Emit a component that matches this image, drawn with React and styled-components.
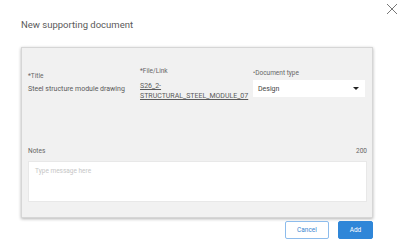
import React from "react";
import styled, { createGlobalStyle } from "styled-components";

const Global = createGlobalStyle`
  html, body {
    margin: 0;
    background: #ffffff;
    font-family: Roboto, "Liberation Sans", sans-serif;
  }
`;

const Page = styled.div`
  position: relative;
  width: 400px;
  height: 243px;
  box-sizing: border-box;
  padding: 19px 27px 0 21px;
`;

const Close = styled.button`
  position: absolute;
  top: 3px;
  right: 2px;
  width: 12px;
  height: 12px;
  padding: 0;
  border: none;
  background: none;
  cursor: pointer;
`;

const Heading = styled.h1`
  margin: 0;
  font-size: 9.5px;
  font-weight: 400;
  color: #5a5a5a;
  line-height: 12px;
`;

const Panel = styled.div`
  margin-top: 16px;
  height: 171px;
  box-sizing: border-box;
  background: #f1f1f1;
  border: 1px solid #d6d6d6;
  box-shadow: 0 1px 3px rgba(0, 0, 0, 0.3);
  padding: 16px 5px 15px 6px;
  display: flex;
  flex-direction: column;
`;

const Fields = styled.div`
  display: grid;
  grid-template-columns: 112px 113px 112px;
  align-items: start;
`;

const Field = styled.div`
  display: flex;
  flex-direction: column;
  padding-top: ${(p) => p.$offset || 0}px;
`;

const Label = styled.div`
  font-size: 6.5px;
  color: #666;
  line-height: 8px;
  margin-bottom: ${(p) => p.$gap || 5}px;
`;

const Value = styled.div`
  font-size: 7px;
  color: #5a5a5a;
  line-height: 9px;
`;

const FileLink = styled.a`
  font-size: 7px;
  color: #5a5a5a;
  line-height: 10px;
  text-decoration: underline;
`;

const Select = styled.div`
  height: 17px;
  background: #fff;
  display: flex;
  align-items: center;
  justify-content: space-between;
  padding: 0 5px;
  font-size: 7px;
  color: #444;
`;

const Caret = styled.span`
  width: 0;
  height: 0;
  border-left: 3px solid transparent;
  border-right: 3px solid transparent;
  border-top: 3px solid #222;
  margin-right: 1px;
`;

const NotesHead = styled.div`
  margin-top: auto;
  display: flex;
  justify-content: space-between;
  font-size: 6.5px;
  color: #666;
  line-height: 8px;
  margin-bottom: 6px;
`;

const Notes = styled.textarea`
  height: 41px;
  box-sizing: border-box;
  resize: none;
  border: 1px solid #e8e8e8;
  background: #fff;
  padding: 5px 6px;
  font-family: inherit;
  font-size: 6.5px;
  color: #333;
  outline: none;
  &::placeholder {
    color: #c6c6c6;
  }
`;

const Actions = styled.div`
  display: flex;
  justify-content: flex-end;
  gap: 9px;
  margin-top: 3px;
`;

const Button = styled.button`
  height: 18px;
  width: ${(p) => p.$w}px;
  box-sizing: border-box;
  border-radius: 2px;
  font-family: inherit;
  font-size: 6.5px;
  cursor: pointer;
  border: 1px solid ${(p) => (p.$primary ? "#2f86d8" : "#8dbcec")};
  background: ${(p) => (p.$primary ? "#2f86d8" : "#fff")};
  color: ${(p) => (p.$primary ? "#fff" : "#3a86d0")};
`;

export default function App() {
  return (
    <>
      <Global />
      <Page>
        <Close aria-label="Close">
          <svg width="12" height="12" viewBox="0 0 12 12">
            <path d="M1 1 L11 11 M11 1 L1 11" stroke="#777" strokeWidth="1" />
          </svg>
        </Close>
        <Heading>New supporting document</Heading>
        <Panel>
          <Fields>
            <Field $offset={8}>
              <Label>*Title</Label>
              <Value>Steel structure module drawing</Value>
            </Field>
            <Field $offset={3}>
              <Label $gap={6}>*File/Link</Label>
              <FileLink>
                S26_2-
                <br />
                STRUCTURAL_STEEL_MODULE_07
              </FileLink>
            </Field>
            <Field $offset={5}>
              <Label $gap={3}>•Document type</Label>
              <Select>
                Design
                <Caret />
              </Select>
            </Field>
          </Fields>
          <NotesHead>
            <span>Notes</span>
            <span>200</span>
          </NotesHead>
          <Notes placeholder="Type message here" />
        </Panel>
        <Actions>
          <Button $w={44}>Cancel</Button>
          <Button $w={35} $primary>
            Add
          </Button>
        </Actions>
      </Page>
    </>
  );
}
